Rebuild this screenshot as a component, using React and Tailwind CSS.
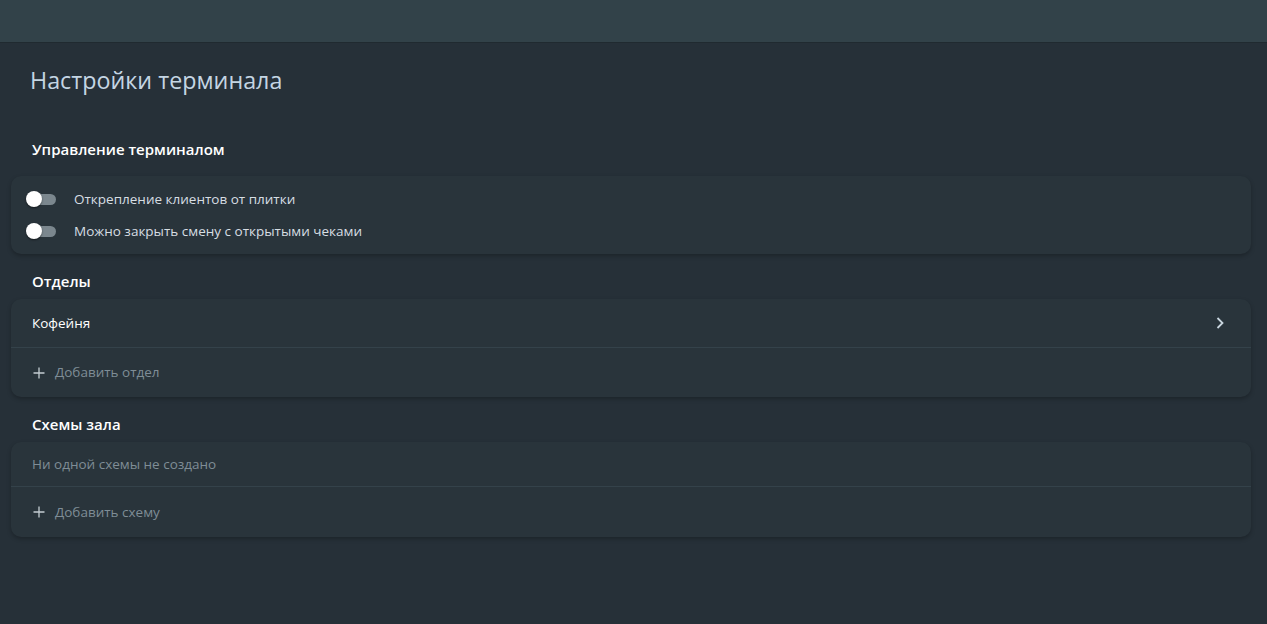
import React from 'react'

const Toggle = () => (
  <div className="relative w-[32px] h-[18px] flex items-center">
    <div className="ml-[4px] w-[26px] h-[11px] rounded-full bg-[#7b878e]" />
    <div className="absolute left-0 top-[1px] w-[16px] h-[16px] rounded-full bg-white shadow-[0_1px_2px_rgba(0,0,0,0.5)]" />
  </div>
)

const Plus = () => (
  <svg width="12" height="12" viewBox="0 0 12 12" className="text-[#c3ccd2]">
    <path d="M6 0.5v11M0.5 6h11" stroke="currentColor" strokeWidth="1.3" />
  </svg>
)

const SectionTitle = ({ children }) => (
  <h2 className="px-[32px] text-[15px] font-semibold text-white h-[18px] leading-[18px]">{children}</h2>
)

const Card = ({ children, className = '' }) => (
  <div className={`ml-[11px] mr-[16px] rounded-[10px] bg-[#29343b] shadow-[0_2px_4px_rgba(0,0,0,0.25)] ${className}`}>
    {children}
  </div>
)

export default function App() {
  const font = { fontFamily: '"Open Sans", "Noto Sans", sans-serif' }
  return (
    <div className="w-[1267px] h-[624px] bg-[#263038] overflow-hidden" style={font}>
      <div className="h-[43px] bg-[#324249] border-b border-[#202a30]" />
      <h1 className="pl-[30px] pt-[22px] text-[23.3px] leading-[30px] text-[#c4d5e3] font-normal">Настройки терминала</h1>

      <div className="mt-[45px]">
        <SectionTitle>Управление терминалом</SectionTitle>
      </div>
      <Card className="mt-[18px] py-[7px]">
        <div className="flex items-center h-[32px] pl-[15px] gap-[16px]">
          <Toggle />
          <span className="text-[13.5px] text-[#d7dee3]">Открепление клиентов от плитки</span>
        </div>
        <div className="flex items-center h-[32px] pl-[15px] gap-[16px]">
          <Toggle />
          <span className="text-[13.5px] text-[#d7dee3]">Можно закрыть смену с открытыми чеками</span>
        </div>
      </Card>

      <div className="mt-[18px]">
        <SectionTitle>Отделы</SectionTitle>
      </div>
      <Card className="mt-[9px]">
        <div className="flex items-center justify-between h-[49px] pl-[21px] pr-[27px] border-b border-[#34424a]">
          <span className="text-[13.5px] text-white">Кофейня</span>
          <svg width="8" height="12" viewBox="0 0 8 12" className="text-[#c9d6df]">
            <path d="M1.5 1l5 5-5 5" fill="none" stroke="currentColor" strokeWidth="1.8" />
          </svg>
        </div>
        <div className="flex items-center h-[49px] pl-[22px] gap-[10px]">
          <Plus />
          <span className="text-[13.5px] text-[#7f8d96]">Добавить отдел</span>
        </div>
      </Card>

      <div className="mt-[18px]">
        <SectionTitle>Схемы зала</SectionTitle>
      </div>
      <Card className="mt-[9px]">
        <div className="flex items-center h-[45px] pl-[21px] border-b border-[#34424a]">
          <span className="text-[13.5px] text-[#7f8d96]">Ни одной схемы не создано</span>
        </div>
        <div className="flex items-center h-[50px] pl-[22px] gap-[10px]">
          <Plus />
          <span className="text-[13.5px] text-[#7f8d96]">Добавить схему</span>
        </div>
      </Card>
    </div>
  )
}
